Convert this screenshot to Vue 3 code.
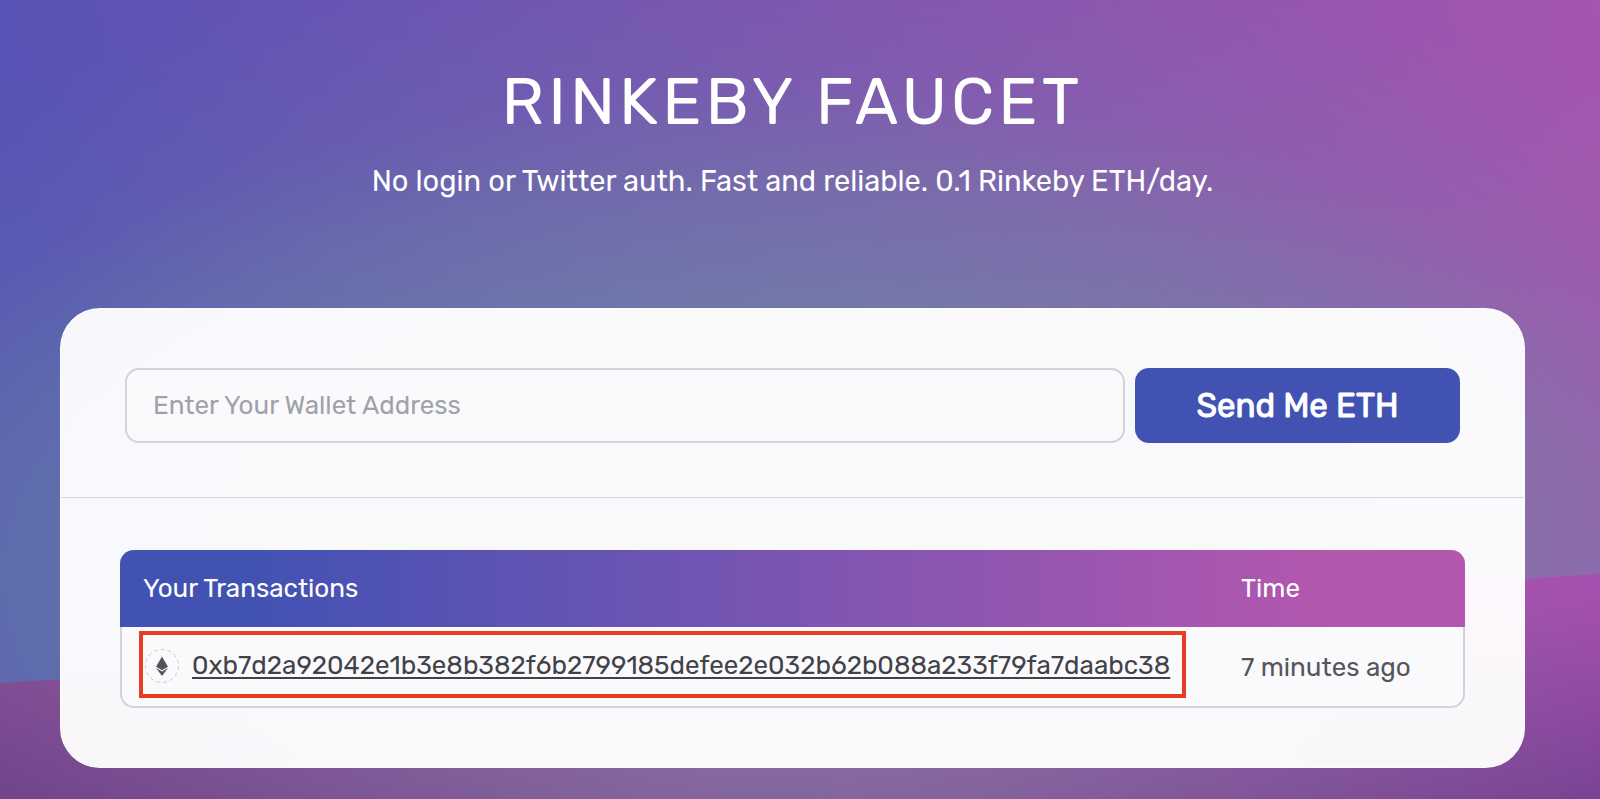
<script setup>
import { ref } from 'vue'

const address = ref('')
const transactions = [
  {
    hash: '0xb7d2a92042e1b3e8b382f6b2799185defee2e032b62b088a233f79fa7daabc38',
    time: '7 minutes ago',
  },
]
</script>

<template>
  <div class="page">
    <div class="wave" aria-hidden="true"></div>
    <header class="hero">
      <h1>RINKEBY FAUCET</h1>
      <p>No login or Twitter auth. Fast and reliable. 0.1 Rinkeby ETH/day.</p>
    </header>

    <main class="card">
      <form class="request" @submit.prevent>
        <input v-model="address" type="text" aria-label="Wallet address" placeholder="Enter Your Wallet Address" />
        <button type="submit">Send Me ETH</button>
      </form>

      <section class="history">
        <table>
          <thead>
            <tr>
              <th scope="col">Your Transactions</th>
              <th scope="col" class="time">Time</th>
            </tr>
          </thead>
          <tbody>
            <tr v-for="tx in transactions" :key="tx.hash">
              <td class="tx">
                <div class="highlight">
                  <svg class="eth" viewBox="0 0 36 36" aria-hidden="true">
                    <circle cx="18" cy="18" r="16.5" fill="none" stroke="#c9cace" stroke-width="1" stroke-dasharray="4 2.9" />
                    <path d="M18 8.5 24 18.7 18 22.2 12 18.7Z" fill="#53545a" />
                    <path d="M12 20 18 23.6 24 20 18 28Z" fill="#53545a" />
                  </svg>
                  <a href="#">{{ tx.hash }}</a>
                </div>
              </td>
              <td class="time">{{ tx.time }}</td>
            </tr>
          </tbody>
        </table>
      </section>
    </main>
  </div>
</template>

<style>
body {
  margin: 0;
}
</style>

<style scoped>
.page {
  position: relative;
  box-sizing: border-box;
  min-height: 100vh;
  padding: 64px 75px 31px 60px;
  font-family: Rubik, Roboto, sans-serif;
  background:
    radial-gradient(ellipse 68% 66% at 49% 72%, rgba(108, 146, 162, 0.66) 0%, rgba(108, 146, 162, 0.58) 50%, rgba(108, 146, 162, 0.36) 74%, rgba(108, 146, 162, 0.12) 92%, rgba(108, 146, 162, 0) 118%),
    linear-gradient(78deg, #5653b4 8%, #7a55b1 50%, #a656ae 102%);
}

.wave {
  position: absolute;
  inset: 0;
  clip-path: polygon(0 85.5%, 100% 71.8%, 100% 100%, 0 100%);
  background:
    radial-gradient(ellipse 54% 60% at 50% 84%, rgba(145, 135, 172, 0.7), rgba(145, 135, 172, 0) 100%),
    linear-gradient(178deg, rgba(70, 50, 115, 0) 76%, rgba(70, 50, 115, 0.5) 102%),
    linear-gradient(90deg, #844b94, #a64dae);
}

.hero {
  position: relative;
  color: #fff;
  text-align: center;
}

h1 {
  margin: 0;
  font-size: 65px;
  font-weight: 400;
  line-height: 76px;
  letter-spacing: 4px;
}

.hero p {
  margin: 21px 0 0;
  font-size: 29px;
  line-height: 40px;
}

.card {
  position: relative;
  box-sizing: border-box;
  margin-top: 107px;
  border: 1px solid rgba(255, 255, 255, 0.6);
  border-radius: 40px;
  background: rgba(255, 255, 255, 0.955);
}

.request {
  display: flex;
  gap: 10px;
  padding: 59px 64px 54px;
  border-bottom: 1px solid #d5d6da;
}

.request input,
.request button {
  box-sizing: border-box;
  height: 75px;
  border-radius: 14px;
  font-family: inherit;
}

.request input {
  flex: 1;
  min-width: 0;
  padding: 0 26px;
  border: 2px solid #d2d4d8;
  background: #fafafc;
  color: #414247;
  font-size: 26px;
}

.request input::placeholder {
  color: #a0a2a9;
  opacity: 1;
}

.request button {
  width: 325px;
  border: 0;
  background: #4252b3;
  color: #fff;
  font-size: 33px;
  font-weight: 400;
  -webkit-text-stroke: 1px #fff;
}

.history {
  padding: 52px 59px 59px;
}

table {
  width: 100%;
  overflow: hidden;
  border-spacing: 0;
  border-radius: 14px;
  background: #fafafc;
  box-shadow: inset 0 0 0 2px #d2d4d8;
  color: #54565b;
  font-size: 26px;
}

thead {
  background: linear-gradient(90deg, #4252b3 10%, #7b55b2 50%, #b457ae 90%);
  color: #fff;
}

th {
  height: 77px;
  padding: 0 23px;
  font-weight: 400;
  text-align: left;
}

.tx {
  padding: 4px 0 10px 19px;
}

.time {
  width: 200px;
  padding: 0 24px 0 0;
}

.highlight {
  display: inline-flex;
  align-items: center;
  gap: 12px;
  box-sizing: border-box;
  height: 67px;
  padding: 2px 12px 0 1px;
  border: 4px solid #ea3c22;
  vertical-align: top;
}

.eth {
  width: 36px;
  height: 36px;
}

.highlight a {
  color: #414247;
  text-decoration: underline;
  text-decoration-thickness: 2px;
  text-underline-offset: 3px;
}
</style>
